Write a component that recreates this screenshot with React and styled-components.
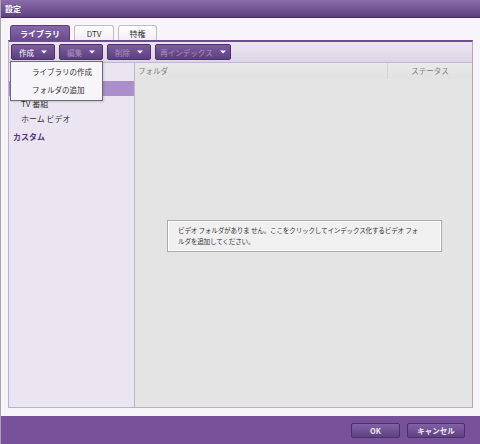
import styled, { createGlobalStyle } from "styled-components";

const GlobalStyle = createGlobalStyle`
    body {
        margin: 0;
        font-family: "Noto Sans CJK JP", "DejaVu Sans", sans-serif;
    }
`;

// first two rows sit under the open menu, so they carry no visible label
const sideItems = [
    { id: "video", label: "", kind: "head" },
    { id: "all", label: "", kind: "item", selected: true },
    { id: "tv", label: "TV 番組", kind: "item" },
    { id: "home", label: "ホーム ビデオ", kind: "item" },
    { id: "custom", label: "カスタム", kind: "head", gap: true },
];

const toolButtons = [
    { label: "作成", enabled: true, width: 44 },
    { label: "編集", width: 44 },
    { label: "削除", width: 44 },
    { label: "再インデックス", width: 76 },
];

const Caret = () => (
    <svg width="6" height="4" viewBox="0 0 6 4">
        <path d="M0 0.5 L6 0.5 L3 3.5 Z" fill="#ffffff" />
    </svg>
);

const App = () => {
    return (
        <>
        <GlobalStyle />
        <Window>
            <TitleBar>設定</TitleBar>
            <Body>
                <TabRow>
                    <Tab $active $width={60}>ライブラリ</Tab>
                    <Tab $width={40}>DTV</Tab>
                    <Tab $width={39}>特権</Tab>
                </TabRow>
                <Panel>
                    <Toolbar>
                        {toolButtons.map((b) => (
                            <ButtonWrap key={b.label}>
                                <ToolButton $enabled={b.enabled} $width={b.width}>
                                    <span>{b.label}</span>
                                    <Caret />
                                </ToolButton>
                                {b.enabled && (
                                    <Menu>
                                        <MenuItem>ライブラリの作成</MenuItem>
                                        <MenuItem>フォルダの追加</MenuItem>
                                    </Menu>
                                )}
                            </ButtonWrap>
                        ))}
                    </Toolbar>
                    <Content>
                        <Sidebar>
                            {sideItems.map((item) =>
                                item.kind === "head" ? (
                                    <SideHead key={item.id} $gap={item.gap}>{item.label}</SideHead>
                                ) : (
                                    <SideItem key={item.id} $selected={item.selected}>{item.label}</SideItem>
                                )
                            )}
                        </Sidebar>
                        <Main>
                            <HeaderRow>
                                <FolderCol>フォルダ</FolderCol>
                                <StatusCol>ステータス</StatusCol>
                            </HeaderRow>
                            <EmptyArea>
                                <Notice>
                                    ビデオ フォルダがありま せん。ここをクリックしてインデックス化するビデオ フォルダを追加してください。
                                </Notice>
                            </EmptyArea>
                        </Main>
                    </Content>
                </Panel>
            </Body>
            <Footer>
                <FooterButton $width={49}>OK</FooterButton>
                <FooterButton $width={58}>キャンセル</FooterButton>
            </Footer>
        </Window>
        </>
    )
}

const Window = styled.div`
    width: 480px;
    height: 444px;
    display: flex;
    flex-direction: column;
    overflow: hidden;
    border-left: 1px solid #a9a4ae;
    box-sizing: border-box;
`;

const TitleBar = styled.div`
    height: 17px;
    flex: none;
    background: linear-gradient(#8b6cac, #5f407f);
    border-bottom: 1px solid #3f2a58;
    color: #ffffff;
    font-size: 8px;
    font-weight: bold;
    line-height: 17px;
    padding-left: 4px;
`;

const Body = styled.div`
    flex: 1;
    display: flex;
    flex-direction: column;
    background: #f7f4fa;
    padding: 7px 7px 8px 7px;
    min-height: 0;
`;

const TabRow = styled.div`
    display: flex;
    gap: 4px;
    height: 15px;
    padding-left: 2px;
    flex: none;
`;

const Tab = styled.div`
    width: ${(p) => p.$width}px;
    box-sizing: border-box;
    border-radius: 3px 3px 0 0;
    display: flex;
    align-items: center;
    justify-content: center;
    font-size: 8px;
    font-weight: ${(p) => (p.$active ? "bold" : "normal")};
    color: ${(p) => (p.$active ? "#ffffff" : "#333333")};
    background: ${(p) => (p.$active ? "linear-gradient(#8767a9, #6a4b8d)" : "linear-gradient(#ffffff, #f1eef4)")};
    border: 1px solid ${(p) => (p.$active ? "#5b3d7c" : "#c2bcc8")};
    border-bottom: none;
`;

const Panel = styled.div`
    flex: 1;
    display: flex;
    flex-direction: column;
    border-top: 2px solid #6c4c8f;
    border-left: 1px solid #bfaed2;
    border-right: 1px solid #b99fd2;
    border-bottom: 1px solid #bfaed2;
    min-height: 0;
`;

const Toolbar = styled.div`
    height: 20px;
    flex: none;
    display: flex;
    align-items: center;
    gap: 4px;
    padding-left: 2px;
    background: linear-gradient(#ebe6f0, #dcd5e3);
    border-bottom: 1px solid #c3b5d3;
    position: relative;
    z-index: 2;
`;

const ButtonWrap = styled.div`
    position: relative;
`;

const ToolButton = styled.div`
    width: ${(p) => p.$width}px;
    height: 16px;
    box-sizing: border-box;
    border: 1px solid #4b3167;
    border-radius: 2px;
    background: linear-gradient(#7c5ca0, #5d3f7e);
    display: flex;
    align-items: center;
    justify-content: center;
    gap: 7px;
    font-size: 7.5px;
    color: ${(p) => (p.$enabled ? "#ffffff" : "#a894bd")};
`;

const Menu = styled.div`
    position: absolute;
    left: -1px;
    top: 17px;
    width: 93px;
    box-sizing: border-box;
    background: #f7f5f9;
    border: 1px solid #6e6a73;
    box-shadow: 1px 1px 2px rgba(0, 0, 0, 0.15);
    padding: 1px 0;
`;

const MenuItem = styled.div`
    height: 18px;
    line-height: 18px;
    padding-left: 21px;
    font-size: 7.5px;
    color: #333333;
`;

const Content = styled.div`
    flex: 1;
    display: flex;
    min-height: 0;
`;

const Sidebar = styled.div`
    width: 125px;
    flex: none;
    background: #ebe5f2;
    border-right: 1px solid #c2b6cf;
`;

const SideHead = styled.div`
    height: 18px;
    line-height: 18px;
    margin-top: ${(p) => (p.$gap ? "2px" : "0")};
    padding-left: 4px;
    font-size: 8px;
    font-weight: bold;
    color: #58347f;
`;

const SideItem = styled.div`
    height: 15px;
    line-height: 15px;
    padding-left: 12px;
    font-size: 8px;
    color: #333333;
    background: ${(p) => (p.$selected ? "#aa8fcb" : "transparent")};
`;

const Main = styled.div`
    flex: 1;
    display: flex;
    flex-direction: column;
    background: #e4e4e4;
`;

const HeaderRow = styled.div`
    height: 16px;
    flex: none;
    display: flex;
    background: linear-gradient(#e9e9e9, #e2e2e2);
    font-size: 7.5px;
    color: #808080;
`;

const FolderCol = styled.div`
    flex: 1;
    padding-left: 3px;
    line-height: 16px;
    border-right: 1px solid #d3d3d3;
`;

const StatusCol = styled.div`
    width: 84px;
    text-align: center;
    line-height: 16px;
`;

const EmptyArea = styled.div`
    flex: 1;
    display: flex;
    align-items: center;
    justify-content: center;
    padding-bottom: 14px;
    padding-left: 2px;
`;

const Notice = styled.div`
    width: 275px;
    box-sizing: border-box;
    border: 1px solid #a9a9a9;
    box-shadow: inset 0 0 0 1px #ffffff;
    background: #f0f0f0;
    padding: 4px 22px 4px 10px;
    font-size: 6.6px;
    letter-spacing: -0.2px;
    line-height: 11px;
    word-break: break-all;
    color: #333333;
`;

const Footer = styled.div`
    height: 28px;
    flex: none;
    background: #77529a;
    display: flex;
    align-items: center;
    justify-content: flex-end;
    gap: 7px;
    padding-right: 15px;
    padding-top: 1px;
    box-sizing: border-box;
`;

const FooterButton = styled.div`
    width: ${(p) => p.$width}px;
    height: 15px;
    box-sizing: border-box;
    border: 1px solid #4c3169;
    border-radius: 2px;
    background: linear-gradient(#8262a6, #5f4081);
    display: flex;
    align-items: center;
    justify-content: center;
    font-size: 7.5px;
    font-weight: bold;
    color: #eee8f4;
`;

export default App;
